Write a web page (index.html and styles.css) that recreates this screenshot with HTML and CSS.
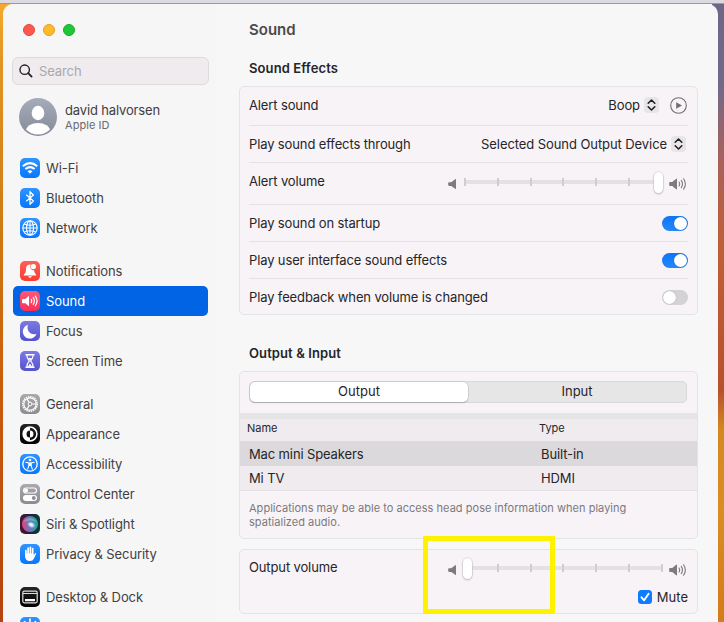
FILE: index.html
```html
<!DOCTYPE html>
<html lang="en">
<head>
<meta charset="utf-8">
<title>Sound</title>
<link rel="stylesheet" href="styles.css">
</head>
<body>
<svg class="defs" aria-hidden="true">
  <symbol id="quiet" viewBox="0 0 10 12"><path d="M1 4.200h2.300L7.200 1.200q.8-.5.8.4v8.800q0 .9-.8.4L3.300 7.900H1q-.8 0-.8-.8V5q0-.8.8-.8z" fill="#7d7b7e"/></symbol>
  <symbol id="loud" viewBox="0 0 18 14"><path d="M1 5h2.300l3.900-3.200q.8-.5.8.4v9.600q0 .9-.8.4L3.300 9H1q-.8 0-.8-.8V5.800Q.2 5 1 5z" fill="#7d7b7e"/><path d="M10 5q1.300 2 0 4M12.300 3.400q2.400 3.600 0 7.200M14.600 1.800q3.600 5.200 0 10.400" fill="none" stroke="#7d7b7e" stroke-width="1.100" stroke-linecap="round"/></symbol>
  <symbol id="updown" viewBox="0 0 15 16"><path d="M4.200 6.200 7.500 3l3.300 3.200M4.200 9.800 7.500 13l3.300-3.200" fill="none" stroke="#222" stroke-width="1.600" stroke-linecap="round" stroke-linejoin="round"/></symbol>
</svg>
<div class="desktop">
  <div class="window">
    <nav class="sidebar">
      <div class="lights"><i class="red"></i><i class="amber"></i><i class="green"></i></div>
      <div class="search">
        <svg width="14" height="14" viewBox="0 0 14 14"><circle cx="5.700" cy="5.700" r="4.700" fill="none" stroke="#222" stroke-width="1.400"/><path d="M9.200 9.200 12.600 12.600" stroke="#222" stroke-width="1.800" stroke-linecap="round"/></svg>
        <span>Search</span>
      </div>
      <div class="account">
        <svg width="38" height="38" viewBox="0 0 38 38"><defs><linearGradient id="av" x2="0" y2="1"><stop stop-color="#a5acba"/><stop offset="1" stop-color="#868a97"/></linearGradient><clipPath id="avc"><circle cx="19" cy="19" r="17.500"/></clipPath></defs><circle cx="19" cy="19" r="19" fill="url(#av)"/><g fill="#fff" clip-path="url(#avc)"><ellipse cx="19" cy="15" rx="6.300" ry="7.200"/><ellipse cx="19" cy="33" rx="12" ry="8"/></g></svg>
        <div><div class="who">david halvorsen</div><div class="id">Apple ID</div></div>
      </div>
      <ul class="group">
        <li><svg class="ico blue" viewBox="0 0 20 20"><g fill="none" stroke="#fff" stroke-width="2"><path d="M2.800 8.300q7.200-6.400 14.400 0M5.400 11.100q4.600-4 9.200 0"/></g><path d="M7.500 13.200q2.500-2 5 0L10 15.800z" fill="#fff"/></svg>Wi-Fi</li>
        <li><svg class="ico blue" viewBox="0 0 20 20"><path d="m6.300 6.700 7.100 6.300L10 16.300V3.700L13.400 7l-7.100 6.300" fill="none" stroke="#fff" stroke-width="1.300" stroke-linejoin="round"/></svg>Bluetooth</li>
        <li><svg class="ico blue" viewBox="0 0 20 20"><g fill="none" stroke="#fff" stroke-width="1.100"><circle cx="10" cy="10" r="7.200"/><ellipse cx="10" cy="10" rx="3.500" ry="7.200"/><path d="M10 2.800v14.400M2.800 10h14.400M4.200 6q5.800 2.600 11.600 0M4.200 14q5.800-2.600 11.600 0"/></g></svg>Network</li>
      </ul>
      <ul class="group">
        <li><svg class="ico coral" viewBox="0 0 20 20"><path d="M9.200 3.400C6.500 4 6 6 6 8.500c0 2.500-.5 3.500-2.200 5.200v.8h12.400v-.8c-1.500-1.500-2-2.700-2.100-4.400-3 .2-4.800-2.700-3.400-5.800zM8 15.200q2 3 4 0z" fill="#fff"/><circle cx="13.300" cy="5.600" r="2.700" fill="#fff"/></svg>Notifications</li>
        <li class="on"><svg class="ico pink" viewBox="0 0 20 20"><path d="M2.800 8h2.500L9 4.800v10.400L5.300 12.200H2.800q-.8 0-.8-.8V8.800q0-.8.800-.8z" fill="#fff"/><path d="M11.200 8.300q1.200 1.700 0 3.400M13.200 6.700q2.300 3.300 0 6.600M15.300 5.200q3.500 4.800 0 9.600" fill="none" stroke="#fff" stroke-width="1.200" stroke-linecap="round"/></svg>Sound</li>
        <li><svg class="ico indigo" viewBox="0 0 20 20"><path d="M8 3.800a7 7 0 1 0 8.500 8.900C11 15 5.800 9.500 8 3.800z" fill="#fff"/></svg>Focus</li>
        <li><svg class="ico indigo" viewBox="0 0 20 20"><path d="M5.500 3.700h9M5.500 16.300h9" stroke="#fff" stroke-width="1.600"/><path d="M6.900 4c0 3.500 1 4.500 2.400 6-1.400 1.500-2.400 2.500-2.400 6h6.200c0-3.500-1-4.500-2.400-6 1.400-1.500 2.400-2.500 2.400-6" fill="none" stroke="#fff" stroke-width="1.200"/><path d="M8 7h4l-2 2.500zM8 15.500l2-3 2 3z" fill="#fff"/></svg>Screen Time</li>
      </ul>
      <ul class="group">
        <li><svg class="ico gray" viewBox="0 0 20 20"><g fill="none" stroke="#fff"><circle cx="10" cy="10" r="7.300" stroke-width="1.500" stroke-dasharray="1.400 .89"/><circle cx="10" cy="10" r="6.200" stroke-width="1.200"/><circle cx="10" cy="10" r="1.900"/><path d="M12 10h4M9 8.300 7 4.900M9 11.700l-2 3.400" stroke-width="1.200"/></g></svg>General</li>
        <li><svg class="ico black" viewBox="0 0 20 20"><circle cx="10" cy="10" r="6.900" fill="none" stroke="#fff" stroke-width="1.500"/><path d="M10 3a7 7 0 0 0 0 14v-3.500a3.500 3.500 0 0 1 0-7z" fill="#fff"/><path d="M10 6.500a3.500 3.500 0 0 1 0 7z" fill="#fff"/></svg>Appearance</li>
        <li><svg class="ico blue" viewBox="0 0 20 20"><circle cx="10" cy="10" r="7.200" fill="none" stroke="#fff" stroke-width="1.300"/><circle cx="10" cy="6" r="1.300" fill="#fff"/><path d="M5.800 8.300 8.900 9v2.500l-1.200 3.700M14.200 8.300l-3.100.7v2.500l1.200 3.700" fill="none" stroke="#fff" stroke-width="1.100" stroke-linecap="round"/><path d="M8.700 8.500h2.600V12H8.700z" fill="#fff"/></svg>Accessibility</li>
        <li><svg class="ico gray" viewBox="0 0 20 20"><rect x="3.500" y="4" width="13" height="5" rx="2.500" fill="none" stroke="#fff" stroke-width="1.200"/><circle cx="6" cy="6.500" r="2" fill="#fff"/><rect x="3" y="11" width="14" height="6" rx="3" fill="#fff"/><circle cx="13.800" cy="14" r="1.900" fill="#8d8d92"/></svg>Control Center</li>
        <li><svg class="ico" viewBox="0 0 20 20"><defs><linearGradient id="s1"><stop stop-color="#e2447d"/><stop offset=".5" stop-color="#6d74c6"/><stop offset="1" stop-color="#18a890"/></linearGradient><radialGradient id="s2"><stop stop-color="#fff"/><stop offset=".4" stop-color="#e7f1ff" stop-opacity=".85"/><stop offset="1" stop-color="#5fa2ef" stop-opacity="0"/></radialGradient><linearGradient id="s3"><stop stop-color="#4a1530"/><stop offset=".5" stop-color="#20203a"/><stop offset="1" stop-color="#073d35"/></linearGradient></defs><rect width="20" height="20" fill="url(#s3)"/><circle cx="10" cy="10" r="8" fill="url(#s1)"/><path d="M3 8q7-8 14 0-6-3-14 0z" fill="#69d4bd" opacity=".6"/><ellipse cx="11.300" cy="10.800" rx="5" ry="3.600" transform="rotate(25 11.300 10.800)" fill="url(#s2)"/></svg>Siri &amp; Spotlight</li>
        <li><svg class="ico blue" viewBox="0 0 20 20"><path d="M5.900 6.500v5M8.100 4v7M10.400 3.300V11M12.700 4.500v7" stroke="#fff" stroke-width="1.700" stroke-linecap="round"/><path d="M5.050 9.500h8.500v2l1.500-2.200q.8-.6 1.200.2l-2.300 5Q13 17 9.900 17q-4.850 0-4.850-5z" fill="#fff"/></svg>Privacy &amp; Security</li>
      </ul>
      <ul class="group">
        <li><svg class="ico black" viewBox="0 0 20 20"><rect x="2.800" y="4.200" width="14.400" height="11.600" rx="1.500" fill="none" stroke="#ddd" stroke-width="1.200"/><path d="M3 6.500h14" stroke="#ddd" stroke-width="1.200"/><path d="M5 12h10v2.300H5z" fill="#fff"/></svg>Desktop &amp; Dock</li>
        <li><svg class="ico blue" viewBox="0 0 20 20"><circle cx="10" cy="10" r="3" fill="#fff"/><path d="M10 2v3M4.500 4.500l2 2M15.500 4.500l-2 2" stroke="#fff" stroke-width="1.600" stroke-linecap="round"/></svg></li>
      </ul>
    </nav>
    <main class="main">
      <h1>Sound</h1>
      <h2>Sound Effects</h2>
      <section class="card effects">
        <div class="row r1"><span>Alert sound</span><span class="pick">Boop<svg class="ud"><use href="#updown"/></svg><svg class="play" viewBox="0 0 17 17"><circle cx="8.500" cy="8.500" r="7.800" fill="none" stroke="#6f6e70" stroke-width="1.100"/><path d="M6.200 5.200v6.600l5.800-3.300z" fill="#6f6e70"/></svg></span></div>
        <div class="row r2"><span>Play sound effects through</span><span class="pick">Selected Sound Output Device<svg class="ud"><use href="#updown"/></svg></span></div>
        <div class="row r3"><span class="label">Alert volume</span>
          <div class="volume"><svg class="quiet"><use href="#quiet"/></svg><div class="track"><i></i><i></i><i></i><i></i><i></i><i></i><i></i><b class="knob end"></b></div><svg class="loud"><use href="#loud"/></svg></div></div>
        <div class="row r4"><span>Play sound on startup</span><span class="switch yes"></span></div>
        <div class="row r5"><span>Play user interface sound effects</span><span class="switch yes"></span></div>
        <div class="row r6"><span>Play feedback when volume is changed</span><span class="switch"></span></div>
      </section>
      <h2 class="second">Output &amp; Input</h2>
      <section class="card devices">
        <div class="tabs"><span class="active">Output</span><span>Input</span></div>
        <div class="table">
          <div class="tr head"><span>Name</span><span>Type</span></div>
          <div class="tr sel"><span>Mac mini Speakers</span><span>Built-in</span></div>
          <div class="tr"><span>Mi TV</span><span>HDMI</span></div>
        </div>
        <p>Applications may be able to access head pose information when playing<br>spatialized audio.</p>
      </section>
      <section class="card output">
        <div class="row"><span class="label">Output volume</span>
          <div class="volume"><svg class="quiet"><use href="#quiet"/></svg><div class="track"><i></i><i></i><i></i><i></i><i></i><i></i><i></i><b class="knob"></b></div><svg class="loud"><use href="#loud"/></svg></div></div>
        <div class="mute"><svg width="14" height="14" viewBox="0 0 14 14"><rect width="14" height="14" rx="3.500" fill="#0f7bff"/><path d="m3.500 7.300 2.600 3 4.500-6.600" fill="none" stroke="#fff" stroke-width="1.900" stroke-linecap="round" stroke-linejoin="round"/></svg><span>Mute</span></div>
      </section>
    </main>
  </div>
  <div class="highlight"></div>
</div>
</body>
</html>
```
FILE: styles.css
```css
* { box-sizing: border-box; }
body { margin: 0; font: 13px/16px Inter, "Liberation Sans", sans-serif; color: #262527; overflow: hidden; }
.defs { display: none; }
.desktop {
  position: relative; width: 724px; height: 622px; padding: 4px 6px 0 3px; overflow: hidden;
  background:
    linear-gradient(#dcdae0, #dcdae0) 0 0 / 100% 3px no-repeat,
    linear-gradient(#cf9334, #cf9334) 0 3px / 100% 1px no-repeat,
    linear-gradient(#f6ab2c 0, #e29524 60px, #ce7812 240px, #c85b0c 400px, #b5430e 622px) 0 0 / 12px 100% no-repeat,
    linear-gradient(#6d6787 0, #71698a 85px, #a9625a 160px, #c05f35 250px, #b9502c 390px, #d28a20 430px, #d98d22 510px, #d57b1a 622px) 100% 0 / 12px 100% no-repeat;
}
.window { display: flex; height: 640px; background: #f7f7f7; border-radius: 10px 10px 0 0; }
.sidebar { width: 213px; flex: none; padding: 20px 7px 0 9px; color: #414042; background: #f6f6f6; border-top-left-radius: 10px; }
.lights { display: flex; gap: 8px; padding-left: 11px; }
.lights i { width: 12px; height: 12px; border-radius: 50%; border: 1px solid #e2463f; background: #ff574f; }
.lights .amber { background: #ffba2b; border-color: #e0a023; }
.lights .green { background: #1fc637; border-color: #17aa2b; }
.search { display: flex; align-items: center; gap: 6px; height: 28px; margin-top: 21px; padding-left: 6px; border: 1px solid #dddbdd; border-radius: 6px; background: #efebee; color: #aaa8ab; letter-spacing: -.1px; }
.search svg { margin-top: -1px; }
.account { display: flex; gap: 8px; margin: 13px 0 17px 7px; }
.who { margin-top: 4px; letter-spacing: -.15px; }
.id { font-size: 11px; line-height: 14px; color: #6a696b; letter-spacing: .05px; }
.group { list-style: none; margin: 0 0 13px; padding: 0; }
.group li { display: flex; align-items: center; gap: 6px; width: 195px; height: 30px; margin-left: 1px; padding-left: 7px; border-radius: 5px; letter-spacing: -.09px; }
.group .on { background: #0064e5; color: #fff; }
.ico { width: 20px; height: 20px; border-radius: 5px; flex: none; }
.blue { background: linear-gradient(#2e94ff, #0877fc); }
.coral { background: linear-gradient(#ff6055, #fa3c31); }
.pink { background: linear-gradient(#ff5878, #fb2e55); }
.indigo { background: linear-gradient(#7d7ae3, #5552cf); }
.gray { background: linear-gradient(#a9a9ae, #8c8c91); }
.black { background: linear-gradient(#252525, #000); }
.main { padding: 0 20px 0 23px; width: 502px; flex: none; }
h1, h2 { margin: 0 0 0 10px; font-size: 13px; line-height: 16px; font-weight: 600; letter-spacing: .1px; }
h1 { padding-top: 16px; font-size: 15px; line-height: 20px; color: #4b4a4c; letter-spacing: 0; }
h2 { margin-top: 20px; }
.second { margin-top: 30px; }
.card { border: 1px solid #e4e3e6; border-radius: 5px; background: #f7f3f7; }
.effects { height: 229px; margin-top: 10px; padding: 0 9px; }
.row { display: flex; justify-content: space-between; align-items: center; border-bottom: 1px solid #e4e2e5; letter-spacing: -.13px; }
.r1 { height: 39px; padding-bottom: 3px; }
.r2 { height: 37px; }
.r3 { height: 42px; padding-bottom: 3px; }
.r4, .r5 { height: 37px; }
.r6 { height: 37px; padding-bottom: 1px; border: 0; }
.label { margin-top: -2px; }
.pick { display: flex; align-items: center; letter-spacing: -.08px; }
.ud { width: 15px; height: 16px; margin-left: 4px; margin-right: 1px; border-radius: 4px; background: #e7e5e8; }
.r2 .ud { margin-right: 2px; }
.play { width: 17px; height: 17px; margin: 2px 1px 0 10px; }
.volume { display: flex; align-items: center; margin-right: 1px; }
.quiet { width: 10px; height: 12px; margin: 3px 6px 0 0; }
.loud { width: 18px; height: 14px; margin: 3px 0 0 6px; }
.track { position: relative; display: flex; justify-content: space-between; align-items: center; width: 199px; height: 22px; background: linear-gradient(#e4e1e4, #e4e1e4) 0 50% / 100% 4px no-repeat; }
.track i { width: 2px; height: 8px; background: #cfcdd0; }
.knob { position: absolute; left: -1px; top: 1px; width: 9px; height: 21px; border-radius: 4.5px; background: #fff; box-shadow: 0 0 0 .5px #cac8cb, 0 1px 2px #0004; }
.knob.end { left: 190px; }
.switch { width: 26px; height: 15px; border-radius: 8px; padding: 1px; background: #d4d2d5; }
.switch::after { content: ""; display: block; width: 13px; height: 13px; border-radius: 50%; background: #fff; box-shadow: 0 0 1px #0005; }
.switch.yes { background: linear-gradient(#0d75f7, #2488fa); }
.switch.yes::after { margin-left: 11px; }
.devices { height: 168px; margin-top: 10px; }
.tabs { display: flex; height: 22px; margin: 9px 10px 10px 9px; border: 1px solid #d9d8da; border-radius: 5px; background: #e7e6e7; }
.tabs span { flex: 1; text-align: center; line-height: 19px; }
.tabs .active { background: #fff; border-radius: 5px; box-shadow: 0 0 0 .5px #bbb, 0 1px 1px #0004; }
.table { border-top: 6px solid #e6e5e6; border-bottom: 1px solid #e2e0e3; background: #efebee; letter-spacing: -.13px; }
.tr { display: flex; height: 24px; line-height: 24px; padding-left: 9px; }
.tr span:first-child { width: 292px; }
.tr.head { height: 22px; line-height: 19px; padding-left: 7px; font-size: 11px; letter-spacing: 0; }
.tr.sel { height: 25px; line-height: 27px; background: #dbd9dc; }
.devices p { margin: 10px 9px 0; font-size: 11px; line-height: 14px; color: #7c7a7d; letter-spacing: .03px; }
.output { height: 65px; margin-top: 10px; padding: 0 9px; }
.output .row { height: 36px; border: 0; }
.mute { display: flex; align-items: center; justify-content: flex-end; gap: 5px; margin-top: 3px; }
.highlight { position: absolute; left: 423px; top: 536px; width: 132px; height: 78px; border: 5px solid #fff200; }
```
